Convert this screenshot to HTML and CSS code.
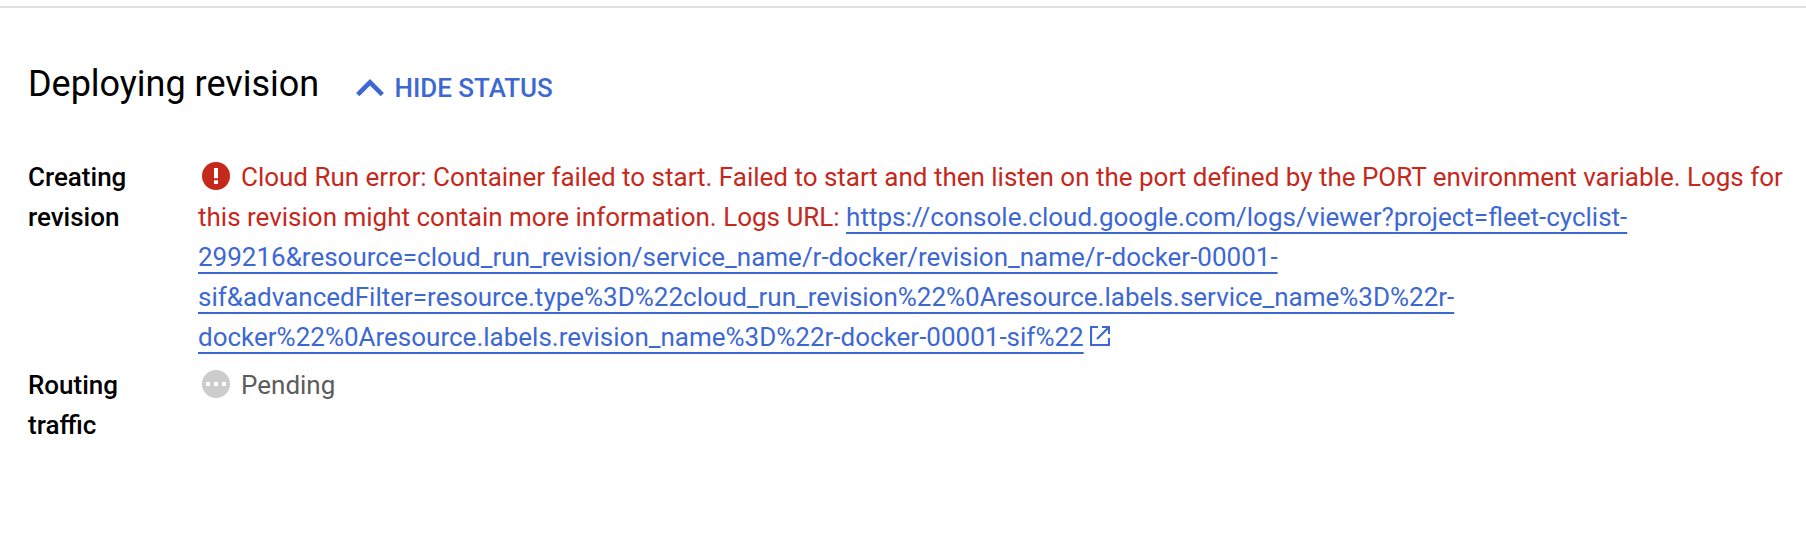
FILE: index.html
```html
<!DOCTYPE html>
<html lang="en">
<head>
<meta charset="utf-8">
<title>Deploying revision</title>
<link rel="stylesheet" href="styles.css">
</head>
<body>
<main class="panel">
<header class="header">
<h1 class="title">Deploying revision</h1>
<button class="toggle"><svg class="chevron" viewBox="0 0 28 18"><path d="M1.700 15.600 14 3.300l12.300 12.300" fill="none" stroke="currentColor" stroke-width="4.600"/></svg><span>HIDE STATUS</span></button>
</header>
<dl class="steps">
<dt class="label">Creating<br>revision</dt>
<dd class="detail error"><svg class="icon" viewBox="0 0 28 28"><circle cx="14" cy="14" r="14" fill="#c5281c"/><path d="M14 6v10.300M14 18.200v3.800" stroke="#fff" stroke-width="4"/></svg><span class="message">Cloud Run error: Container failed to start. Failed to start and then listen on the port defined by the PORT environment variable. Logs for</span><br><span>this revision might contain more information. Logs URL: </span><a class="link" href="#">https://console.cloud.google.com/logs/viewer?project=fleet-cyclist-<br>299216&amp;resource=cloud_run_revision/service_name/r-docker/revision_name/r-docker-00001-<br>sif&amp;advancedFilter=resource.type%3D%22cloud_run_revision%22%0Aresource.labels.service_name%3D%22r-<br>docker%22%0Aresource.labels.revision_name%3D%22r-docker-00001-sif%22</a><svg class="external" viewBox="0 0 20 20"><path d="M8 1H1v18h18v-7M12 1h7v7M19 1 7 13" fill="none" stroke="currentColor" stroke-width="2.200"/></svg></dd>
<dt class="label">Routing<br>traffic</dt>
<dd class="detail pending"><svg class="icon" viewBox="0 0 28 28"><circle cx="14" cy="14" r="14" fill="#ccc"/><path d="M4 12h4v4H4zM12 12h4v4h-4zM20 12h4v4h-4z" fill="#fff"/></svg><span>Pending</span></dd>
</dl>
</main>
</body>
</html>
```
FILE: styles.css
```css
body { margin: 0; background: #fff; font-family: Roboto, sans-serif; color: #000; }
.panel { margin-top: 6px; border-top: 2px solid #e0e0e0; padding: 52px 0 0 28px; }
.header { display: flex; align-items: center; gap: 37px; height: 48px; }
.title { margin: 0; font-size: 36px; font-weight: 400; line-height: 48px; letter-spacing: -0.02px; }
.toggle { display: flex; align-items: center; gap: 10.5px; padding: 8px 0 0; border: 0; background: none; color: #3d68d2; font: 500 26px/40px Roboto, sans-serif; letter-spacing: -0.03px; }
.chevron { width: 28px; height: 18px; }
.steps { display: grid; grid-template-columns: 170px 1fr; row-gap: 8px; margin: 49px 0 0; font-size: 26px; line-height: 40px; }
.label { font-weight: 500; }
.detail { margin: 0; white-space: nowrap; }
.error { color: #c5281c; }
.pending { color: #5c5c5c; }
.message { letter-spacing: -0.01px; }
.icon { width: 28px; height: 28px; margin: 0 11px 0 4px; vertical-align: -4px; }
.link { color: #3d68d2; text-decoration: underline; text-decoration-thickness: 2px; text-underline-offset: 6px; text-decoration-skip-ink: none; }
.external { width: 20px; height: 20px; margin-left: 6px; vertical-align: 0; color: #3d68d2; }
```
